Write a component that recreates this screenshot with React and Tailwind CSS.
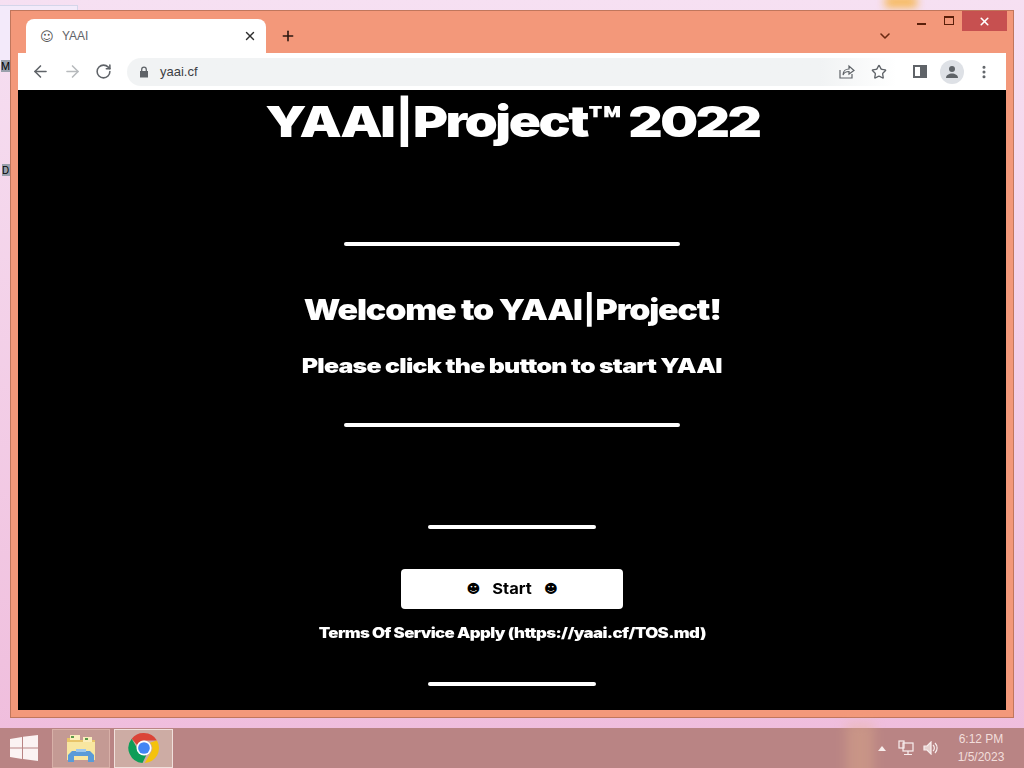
import React from "react";
import { ArrowLeft, ArrowRight, RotateCw, Star, X, Plus, ChevronDown, EllipsisVertical } from "lucide-react";

const wide = { fontFamily: "Inter, 'Liberation Sans', sans-serif" };

function Rule({ short }) {
  return <div className={`${short ? "w-[168px]" : "w-[336px]"} h-1 rounded-full bg-white shrink-0`} />;
}

function Chrome() {
  return (
    <svg width="36" height="36" viewBox="0 0 48 48">
      <path d="M24 4a20 20 0 0 1 17.3 10H24a10 10 0 0 0-9.2 6L7.6 11.5A20 20 0 0 1 24 4z" fill="#db4437" />
      <path d="M41.3 14A20 20 0 0 1 25 44l8.4-14.6A10 10 0 0 0 32 17z" fill="#f4c20d" />
      <path d="M7.6 11.5l8.6 15A10 10 0 0 0 27 33.6L22 44A20 20 0 0 1 7.6 11.5z" fill="#0f9d58" />
      <circle cx="24" cy="24" r="10" fill="#fff" />
      <circle cx="24" cy="24" r="7.8" fill="#4285f4" />
    </svg>
  );
}

function Folder() {
  return (
    <svg width="32" height="30" viewBox="0 0 32 30">
      <path d="M2 5h11l2 2h15v20H2z" fill="#e8c468" />
      <path d="M2 9h28v18H2z" fill="#f8e6a0" />
      <rect x="5" y="2" width="10" height="5" fill="#fbeebc" />
      <rect x="18" y="4" width="9" height="5" fill="#fbeebc" />
      <rect x="6" y="3" width="3" height="2" fill="#5b9a4a" />
      <rect x="20" y="5" width="3" height="2" fill="#5b9a4a" />
      <path d="M3 29v-7l4-4h18l4 4v7h-6v-6H9v6z" fill="#5a9bd8" />
      <rect x="11" y="16" width="10" height="3" fill="#9cc7ee" />
    </svg>
  );
}

function WinLogo() {
  return (
    <svg width="28" height="26" viewBox="0 0 28 26" fill="#fbf3f3">
      <path d="M0 4l12-2v10.500H0z" />
      <path d="M13 1.800L28 0v12.500H13z" />
      <path d="M0 13.500h12V24L0 22z" />
      <path d="M13 13.500h15V26l-15-2z" />
    </svg>
  );
}

export default function App() {
  return (
    <div className="w-[1024px] h-[768px] relative overflow-hidden flex flex-col bg-gradient-to-b from-[#f6e0f2] to-[#efbcdc]" style={wide}>
      <div className="absolute left-[885px] top-[-4px] w-8 h-3 bg-[#f6b95c] blur-[4px]" />

      <div className="relative flex-1">
        <div className="absolute left-0 top-[5px] w-[78px] h-[60px] border-t border-r border-[#d4d6ea] bg-[#f3eafa]" />
        <span className="absolute left-[1px] top-[60px] w-[9px] h-3 bg-[#9aa0ac] text-[10px] leading-3 text-black overflow-hidden">M</span>
        <span className="absolute left-[2px] top-[164px] w-2 h-3 bg-[#9aa0ac] text-[10px] leading-3 text-black overflow-hidden">D</span>

        <div className="absolute left-[10px] top-[10px] w-[1004px] h-[708px] border border-[#c0765c] bg-[#f3987a] flex flex-col px-[7px] pb-[7px]">
          {/* Tab strip */}
          <div className="h-[42px] shrink-0 relative flex items-end pl-2">
            <div className="w-[240px] h-[34px] bg-white rounded-t-lg flex items-center pl-[14px] pr-[9px] text-[#5f6368] text-xs" style={{ fontFamily: "'Liberation Sans', sans-serif" }}>
              <span className="w-3 text-[13px] text-[#555] mr-[10px] leading-none" style={{ fontFamily: "'DejaVu Sans', sans-serif" }}>☺</span>
              <span>YAAI</span>
              <X className="ml-auto text-[#2f2f2f]" size={14} strokeWidth={2.4} />
            </div>
            <Plus className="ml-[14px] mb-[9px] text-[#2b1710]" size={16} strokeWidth={2.4} />
            <ChevronDown className="absolute left-[859px] top-[17px] text-[#6b2a12]" size={16} strokeWidth={2.4} />
            <div className="absolute right-[44px] top-0 flex items-start">
              <div className="w-[9px] h-[2px] bg-[#5a1f0a] mt-[12px] mr-[18px]" />
              <div className="w-[10px] h-[9px] border border-[#5a1f0a] border-t-2 mt-[5px] mr-[8px]" />
            </div>
            <div className="absolute right-[-1px] top-0 w-[45px] h-[20px] bg-[#c75050] flex items-center justify-center">
              <X className="text-white" size={13} strokeWidth={3} />
            </div>
          </div>

          {/* Toolbar */}
          <div className="h-[37px] shrink-0 bg-white flex items-center pl-[13px] text-[#5f6368]">
            <ArrowLeft size={19} strokeWidth={2} className="mr-[13px]" />
            <ArrowRight size={19} strokeWidth={2} className="mr-[13px] text-[#b7babd]" />
            <RotateCw size={17} strokeWidth={2.2} className="mr-[15px]" />
            <div className="w-[770px] h-7 rounded-l-full bg-gradient-to-r from-[#f1f3f4] from-90% to-white flex items-center pl-[11px] shrink-0">
              <svg width="12" height="12" viewBox="0 0 12 12" fill="#5f6368">
                <path d="M2 5h8v6.500H2z" />
                <path d="M3.700 5V3.400a2.300 2.300 0 0 1 4.600 0V5" fill="none" stroke="#5f6368" strokeWidth="1.3" />
              </svg>
              <span className="ml-[10px] text-[13px] text-[#3c4043]" style={{ fontFamily: "'Liberation Sans', sans-serif" }}>yaai.cf</span>
              <div className="ml-auto flex items-center gap-4 pr-[10px]">
                <svg width="16" height="15" viewBox="0 0 16 15" fill="none" stroke="#5f6368" strokeWidth="1.2">
                  <path d="M1 6v8h12V10" />
                  <path d="M4 11c0-4 3-6 6-6V2l5 4.500L10 10V7.500c-3 0-5 1-6 3.500z" />
                </svg>
                <Star size={16} strokeWidth={2} />
              </div>
            </div>
            <div className="w-[14px] h-[13px] border-2 border-[#5f6368] ml-[16px] flex justify-end shrink-0">
              <div className="w-[5px] bg-[#5f6368]" />
            </div>
            <div className="w-6 h-6 rounded-full bg-[#dee1e6] ml-[13px] flex items-center justify-center shrink-0">
              <svg width="14" height="14" viewBox="0 0 14 14" fill="#5f6368">
                <circle cx="7" cy="4" r="3" />
                <path d="M1 13c0-3 3-4.500 6-4.500s6 1.500 6 4.500z" />
              </svg>
            </div>
            <EllipsisVertical size={16} strokeWidth={2.6} className="ml-[12px]" />
          </div>

          {/* Page */}
          <main className="flex-1 bg-black text-white flex flex-col items-center overflow-hidden">
            <h1 className="h-[44px] mt-[9px] text-[43px] leading-[44px] font-black tracking-[-2px] scale-x-[1.24] whitespace-nowrap">YAAI<span className="font-bold mx-[1px]">|</span>Project™ 2022</h1>
            <div className="mt-[99px]"><Rule /></div>
            <h2 className="mt-[46px] h-[36px] text-[29px] leading-[36px] font-black scale-x-[1.17] whitespace-nowrap tracking-[-1px]">Welcome to YAAI<span className="font-bold mx-[1px]">|</span>Project!</h2>
            <h3 className="mt-[26px] h-[24px] text-[20px] leading-[24px] font-black scale-x-[1.245] whitespace-nowrap tracking-[-0.6px]">Please click the button to start YAAI</h3>
            <div className="mt-[45px]"><Rule /></div>
            <div className="mt-[98px]"><Rule short /></div>
            <button className="mt-[40px] w-[222px] h-10 bg-white rounded-sm text-black flex items-center justify-center text-[15px] font-bold">
              <span className="text-[13px]" style={{ fontFamily: "'DejaVu Sans', sans-serif" }}>☻</span>
              <span className="mx-[14px] scale-x-[1.1]">Start</span>
              <span className="text-[13px]" style={{ fontFamily: "'DejaVu Sans', sans-serif" }}>☻</span>
            </button>
            <p className="mt-[15px] h-[18px] text-[14px] leading-[18px] font-black scale-x-[1.2] whitespace-nowrap tracking-[-0.5px]">Terms Of Service Apply (https://yaai.cf/TOS.md)</p>
            <div className="mt-[40px]"><Rule short /></div>
          </main>
        </div>
      </div>

      {/* Taskbar */}
      <footer className="relative h-10 shrink-0 bg-[#b98484] flex items-center" style={{ fontFamily: "'Liberation Sans', sans-serif" }}>
        <div className="w-[48px] flex justify-center"><WinLogo /></div>
        <div className="ml-1 w-[58px] h-[39px] border border-[#d8b0a8] bg-[#c49a94] flex items-center justify-center"><Folder /></div>
        <div className="w-[59px] h-[39px] ml-1 border border-[#f0e0dc] bg-[#cdaca4] flex items-center justify-center"><Chrome /></div>
        <div className="ml-auto flex items-center text-[#f2dedb]">
          <svg width="8" height="5" viewBox="0 0 8 5" fill="#f8eeee" className="mr-[12px]"><path d="M4 0l4 5H0z" /></svg>
          <svg width="16" height="16" viewBox="0 0 16 16" fill="none" stroke="#f8eeee" strokeWidth="1.2" className="mr-[9px]">
            <rect x="1" y="1" width="5" height="7" />
            <rect x="5" y="3" width="10" height="8" />
            <path d="M10 11v3M6 14.500h8" />
          </svg>
          <svg width="16" height="14" viewBox="0 0 16 14" fill="none" stroke="#f8eeee" strokeWidth="1.2" className="mr-[12px]">
            <path d="M1 5h3l4-4v12L4 9H1z" fill="#e6d2d0" />
            <path d="M10 4a4 4 0 0 1 0 6M12 2a7 7 0 0 1 0 10" />
          </svg>
          <div className="w-[60px] mr-[13px] text-xs leading-[18px] text-center">
            <div>6:12 PM</div>
            <div>1/5/2023</div>
          </div>
        </div>
      </footer>
      <div className="absolute left-[846px] top-[722px] w-7 h-[60px] bg-[#e6b48c] blur-[6px] opacity-35" />
    </div>
  );
}
